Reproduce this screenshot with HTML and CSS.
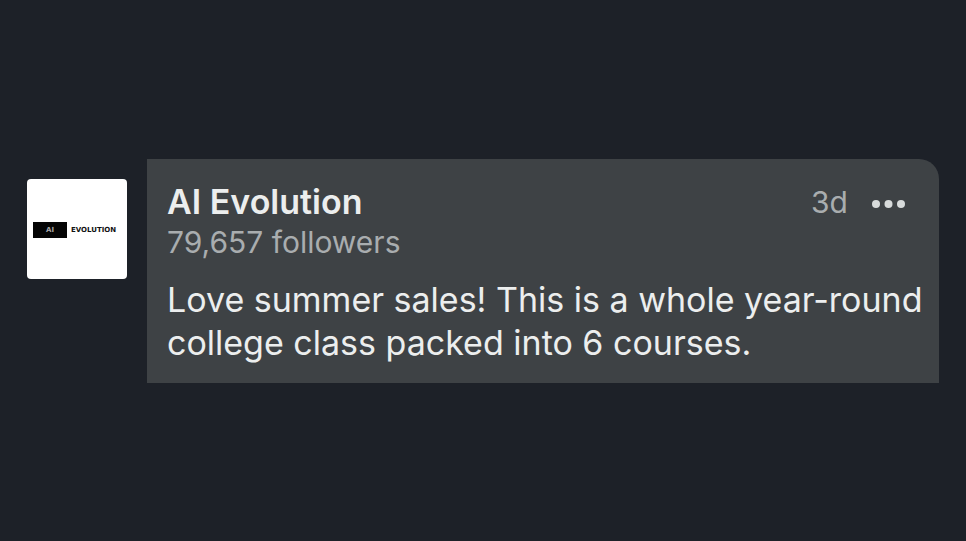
FILE: index.html
```html
<!DOCTYPE html>
<html lang="en">

	<head>
		<meta charset="UTF-8">
		<title>AI Evolution</title>
		<link rel="stylesheet" href="styles.css">
	</head>

	<body>
		<article class="comment">
			<a class="avatar" href="#" aria-label="AI Evolution">
				<span class="logo-mark">AI</span>
				<span class="logo-name">EVOLUTION</span>
			</a>
			<div class="bubble">
				<header class="head">
					<div class="author">
						<a class="name" href="#">AI Evolution</a>
						<p class="followers">79,657 followers</p>
					</div>
					<time class="age">3d</time>
					<button class="more" type="button" aria-label="More options">
						<svg width="33" height="8" viewBox="0 0 33 8" fill="currentColor">
							<circle cx="4" cy="4" r="4" />
							<circle cx="16.5" cy="4" r="4" />
							<circle cx="29" cy="4" r="4" />
						</svg>
					</button>
				</header>
				<p class="text">Love summer sales! This is a whole year-round college class packed into 6 courses.</p>
			</div>
		</article>
	</body>

</html>
```

FILE: styles.css
```css
* {
	box-sizing: border-box;
}

body {
	margin: 0;
	min-height: 100vh;
	display: flex;
	align-items: center;
	background-color: #1d2128;
	color: #eceeee;
	font-family: Inter, "Liberation Sans", sans-serif;
}

p {
	margin: 0;
}

a {
	color: inherit;
	text-decoration: none;
}

.comment {
	flex: 1;
	display: flex;
	align-items: flex-start;
	gap: 20px;
	padding: 0 27px;
}

.avatar {
	flex: none;
	display: flex;
	align-items: center;
	gap: 4px;
	width: 100px;
	height: 100px;
	margin-top: 20px;
	padding: 2px 0 0 6px;
	border-radius: 4px;
	background-color: #fff;
	color: #111;
	font-family: "DejaVu Sans", sans-serif;
	font-size: 7px;
	font-weight: bold;
}

.logo-mark {
	width: 34px;
	line-height: 16px;
	background-color: #050505;
	color: #aaa;
	text-align: center;
}

.bubble {
	flex: 1;
	padding: 21px 16px 19px 20px;
	border-radius: 0 20px 0 0;
	background-color: #3e4245;
}

.head {
	display: flex;
	align-items: flex-start;
}

.author {
	flex: 1;
}

.name {
	display: block;
	font-size: 34px;
	line-height: 44px;
	font-weight: 600;
}

.followers {
	font-size: 30px;
	line-height: 36px;
	color: #a9adaf;
}

.age {
	font-size: 30px;
	line-height: 44px;
	color: #a9adaf;
}

.more {
	margin: 20px 18px 0 24px;
	padding: 0;
	border: 0;
	background: none;
	color: #d8dbdb;
}

.more svg {
	display: block;
}

.text {
	margin-top: 18px;
	font-size: 34px;
	line-height: 43px;
}
```
